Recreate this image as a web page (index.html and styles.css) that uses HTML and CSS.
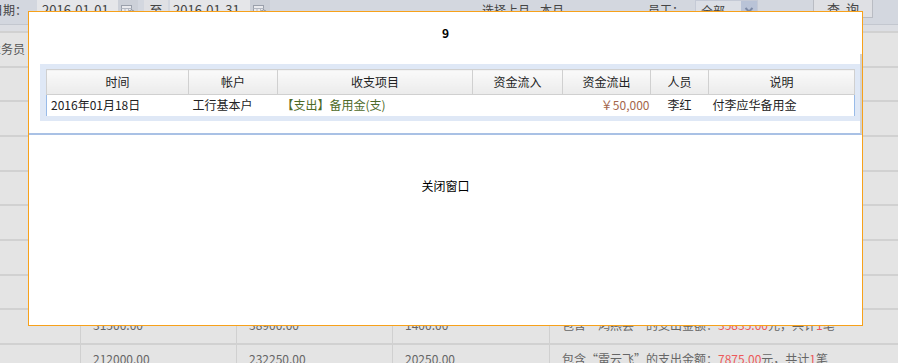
FILE: index.html
```html
<!DOCTYPE html>
<html lang="zh-CN">
<head>
  <meta charset="utf-8">
  <title>资金流水明细</title>
  <link rel="stylesheet" href="styles.css">
</head>
<body>
<div class="page">
  <div class="toolbar">
    <span class="tb-label date-label">日期：</span>
    <span class="date-input">2016-01-01</span>
    <span class="cal-btn">
      <svg width="16" height="14" viewBox="0 0 16 14"><rect x="1.5" y="2.5" width="10" height="9" fill="#e9eaee" stroke="#9aa0ab"/><path d="M1.5 5.5h10M5 5.5v6M8.5 5.5v6M1.5 8.5h10" stroke="#b3b8c2" fill="none"/><circle cx="11.5" cy="10" r="3" fill="#e9eaee" stroke="#8a909b"/></svg>
    </span>
    <span class="to">至</span>
    <span class="date-input second">2016-01-31</span>
    <span class="cal-btn">
      <svg width="16" height="14" viewBox="0 0 16 14"><rect x="1.5" y="2.5" width="10" height="9" fill="#e9eaee" stroke="#9aa0ab"/><path d="M1.5 5.5h10M5 5.5v6M8.5 5.5v6M1.5 8.5h10" stroke="#b3b8c2" fill="none"/><circle cx="11.5" cy="10" r="3" fill="#e9eaee" stroke="#8a909b"/></svg>
    </span>
    <span class="quick"><a>选择上月</a><a>本月</a></span>
    <span class="tb-label staff-label">员工：</span>
    <span class="select">全部
      <span class="select-arrow"><svg width="10" height="8" viewBox="0 0 10 8"><path d="M1.5 2l3.5 3.5 3.5-3.5" stroke="#7d8aa6" stroke-width="2" fill="none"/></svg></span>
    </span>
    <span class="search-btn">查&nbsp;&nbsp;询</span>
  </div>
  <div class="strip"></div>
  <div class="list">
    <div class="row"><div class="cell name">业务员</div><div class="cell">资金流入</div><div class="cell">资金流出</div><div class="cell">备用金</div><div class="cell">说明</div></div>
    <div class="row"><div class="cell name"></div><div class="cell">45200.00</div><div class="cell">51800.00</div><div class="cell">2600.00</div><div class="cell">包含“李红”的支出金额：<em>50000.00</em>元，共计<em>1</em>笔</div></div>
    <div class="row"><div class="cell name"></div><div class="cell">18000.00</div><div class="cell">20150.00</div><div class="cell">600.00</div><div class="cell">包含“张伟”的支出金额：<em>2150.00</em>元，共计<em>1</em>笔</div></div>
    <div class="row"><div class="cell name"></div><div class="cell">27600.00</div><div class="cell">30400.00</div><div class="cell">1200.00</div><div class="cell">包含“王芳”的支出金额：<em>2800.00</em>元，共计<em>1</em>笔</div></div>
    <div class="row"><div class="cell name"></div><div class="cell">9800.00</div><div class="cell">11300.00</div><div class="cell">500.00</div><div class="cell">包含“刘洋”的支出金额：<em>1500.00</em>元，共计<em>1</em>笔</div></div>
    <div class="row"><div class="cell name"></div><div class="cell">62000.00</div><div class="cell">64750.00</div><div class="cell">3250.00</div><div class="cell">包含“陈静”的支出金额：<em>2750.00</em>元，共计<em>1</em>笔</div></div>
    <div class="row"><div class="cell name"></div><div class="cell">15500.00</div><div class="cell">17900.00</div><div class="cell">900.00</div><div class="cell">包含“赵磊”的支出金额：<em>2400.00</em>元，共计<em>1</em>笔</div></div>
    <div class="row"><div class="cell name"></div><div class="cell">8400.00</div><div class="cell">9600.00</div><div class="cell">400.00</div><div class="cell">包含“孙丽”的支出金额：<em>1200.00</em>元，共计<em>1</em>笔</div></div>
    <div class="row"><div class="cell name"></div><div class="cell">31500.00</div><div class="cell">38900.00</div><div class="cell">1400.00</div><div class="cell">包含“鸿燕芸”的支出金额：<em>35835.00</em>元，共计<em>1</em>笔</div></div>
    <div class="row"><div class="cell name"></div><div class="cell">212000.00</div><div class="cell">232250.00</div><div class="cell">20250.00</div><div class="cell">包含“雷云飞”的支出金额：<em>7875.00</em>元，共计<em>1</em>笔</div></div>
  </div>
</div>

<div class="dialog">
  <div class="dialog-title">9</div>
  <div class="dialog-frame">
    <div class="panel">
      <table class="grid">
        <colgroup>
          <col style="width:142px"><col style="width:89px"><col style="width:195px"><col style="width:90px"><col style="width:88px"><col style="width:58px"><col style="width:146px">
        </colgroup>
        <thead>
          <tr><th>时间</th><th>帐户</th><th>收支项目</th><th>资金流入</th><th>资金流出</th><th>人员</th><th>说明</th></tr>
        </thead>
        <tbody>
          <tr>
            <td>2016年01月18日</td>
            <td>工行基本户</td>
            <td class="item">【支出】备用金(支)</td>
            <td class="money"></td>
            <td class="money out">￥50,000</td>
            <td class="center">李红</td>
            <td>付李应华备用金</td>
          </tr>
        </tbody>
      </table>
    </div>
  </div>
  <div class="dialog-foot"><a class="close-link">关闭窗口</a></div>
</div>
</body>
</html>
```

FILE: styles.css
```css
* {
  margin: 0;
  padding: 0;
  box-sizing: border-box;
}

body {
  font-family: "Noto Sans CJK SC", "Liberation Sans", sans-serif;
  font-size: 12px;
  color: #555;
  background: #e4e4e4;
  overflow: hidden;
}

a {
  cursor: pointer;
}

.toolbar {
  display: flex;
  align-items: flex-start;
  height: 25px;
  background: #d3d7df;
  border-bottom: 1px solid #c3c7cf;
  color: #444;
  white-space: nowrap;
}

.tb-label {
  display: block;
  line-height: 20px;
}

.date-label {
  width: 36px;
  margin-left: -9px;
}

.date-input {
  display: block;
  width: 81px;
  height: 20px;
  margin-left: 10px;
  padding-left: 5px;
  line-height: 20px;
  font-size: 13px;
  background: #e5e6e9;
  border-bottom: 1px solid #c9ccd3;
}

.date-input.second {
  width: 80px;
  margin-left: 2px;
  padding-left: 3px;
}

.cal-btn {
  display: flex;
  align-items: center;
  justify-content: center;
  width: 20px;
  height: 20px;
  background: #ccd0d8;
}

.to {
  display: block;
  width: 24px;
  height: 20px;
  margin-left: 6px;
  line-height: 20px;
  text-align: center;
  font-size: 13px;
  background: #dfe0e4;
}

.quick {
  display: flex;
  gap: 10px;
  width: 80px;
  margin-left: 212px;
  line-height: 20px;
}

.staff-label {
  width: 36px;
  margin-left: 86px;
}

.select {
  position: relative;
  display: block;
  width: 63px;
  height: 19px;
  margin-left: 11px;
  padding-left: 5px;
  line-height: 19px;
  background: #dcdfe6;
  border: 1px solid #c5cad6;
}

.select-arrow {
  position: absolute;
  top: 0;
  right: 0;
  display: flex;
  align-items: center;
  justify-content: center;
  width: 16px;
  height: 17px;
  background: #b9c3d7;
}

.search-btn {
  display: block;
  width: 60px;
  height: 18px;
  margin-left: 55px;
  line-height: 18px;
  text-align: center;
  font-size: 13px;
  background: #dfe0e4;
  border: 1px solid #b9bcc3;
  border-top: 0;
}

.strip {
  height: 6px;
  background: #dcdee3;
}

.row {
  display: grid;
  grid-template-columns: 80px 156px 156px 157px 1fr;
  height: 34.667px;
  border-top: 2px solid #d1d1d1;
}

.cell {
  display: flex;
  align-items: center;
  padding: 0 0 5px 12px;
  border-left: 1px solid #d0d0d0;
  white-space: nowrap;
  overflow: hidden;
  color: #666;
}

.cell.name {
  border-left: 0;
  padding-left: 0;
  padding-bottom: 2px;
  margin-left: -11px;
  color: #555;
}

.cell em {
  font-style: normal;
  color: #ec5a5a;
}

/* 弹出窗口 */
.dialog {
  position: absolute;
  left: 28px;
  top: 11px;
  width: 835px;
  height: 315px;
  background: #fff;
  border: 1px solid #f7a11a;
  color: #000;
}

.dialog-title {
  height: 42px;
  line-height: 42px;
  text-align: center;
  font-weight: bold;
}

.dialog-frame {
  padding: 10px 0 12px 11px;
  border-right: 2px solid #d3d3d3;
  border-bottom: 2px solid #a9c1e5;
}

.panel {
  padding: 5px 6px;
  background: #dfe8f6;
}

.grid {
  width: 100%;
  table-layout: fixed;
  border-collapse: collapse;
  background: #fff;
  color: #222;
  line-height: 14px;
}

.grid th {
  height: 25px;
  font-weight: normal;
  text-align: center;
  background: linear-gradient(#fafafa, #ebebeb);
  border: 1px solid #d0d0d0;
}

.grid td {
  height: 21px;
  padding: 0 4px;
  white-space: nowrap;
  border: 0;
}

.grid td:first-child {
  border-left: 1px solid #99bbe8;
}

.grid td:last-child {
  border-right: 1px solid #99bbe8;
}

.grid .item {
  color: #4d6a28;
}

.grid .money {
  text-align: right;
  padding-right: 1px;
}

.grid .out {
  color: #a4664b;
}

.grid .center {
  text-align: center;
}

.dialog-foot {
  margin-top: 40px;
  line-height: 22px;
  text-align: center;
}

.close-link {
  color: #000;
}
```
